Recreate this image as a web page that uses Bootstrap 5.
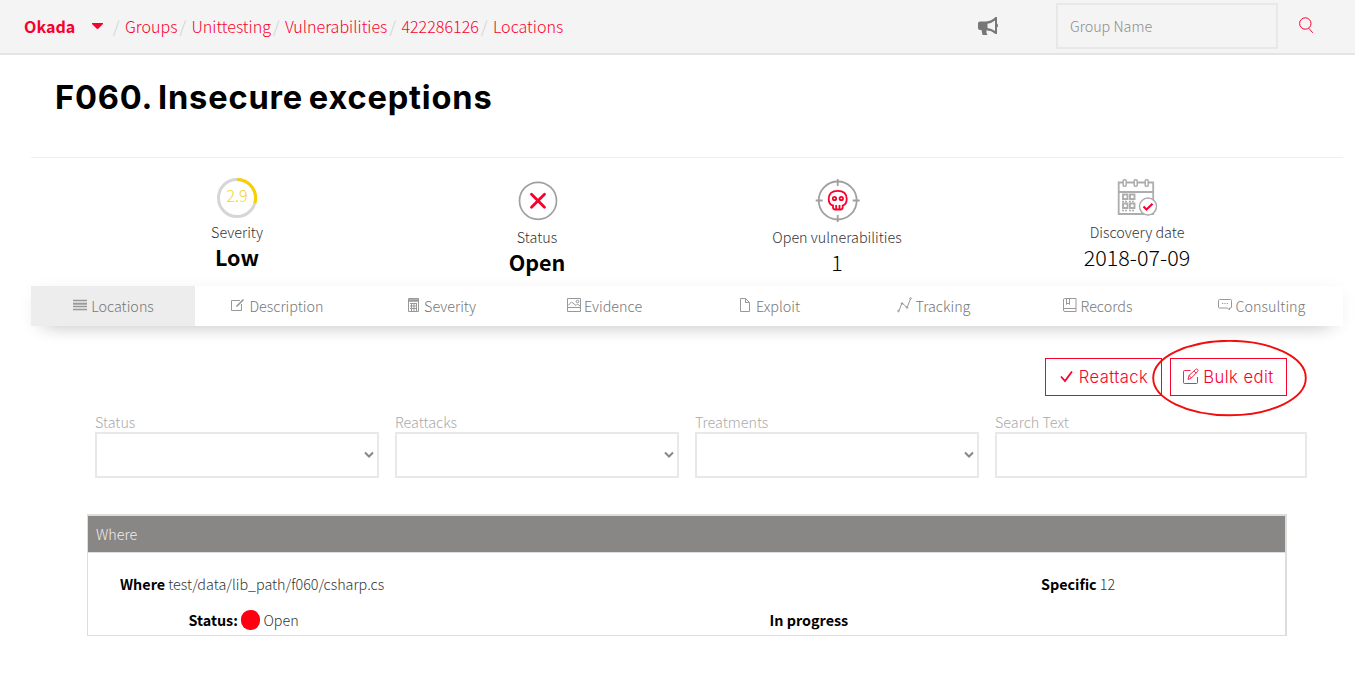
<!DOCTYPE html>
<html lang="en">
<head>
<meta charset="utf-8">
<meta name="viewport" content="width=device-width, initial-scale=1">
<title>F060. Insecure exceptions</title>
<link href="https://cdn.jsdelivr.net/npm/bootstrap@5.3.0/dist/css/bootstrap.min.css" rel="stylesheet">
<style>
:root{--brand:#f9002d}
body{font-family:"Noto Sans CJK SC","Open Sans",sans-serif;font-weight:300;font-size:14.35px;line-height:20px;color:#333;background:#fff;overflow:hidden}
b,.strong{font-weight:700;color:#000}
svg{display:block;flex:none}
.topbar{height:55px;background:#f4f4f4;border-bottom:2px solid #e4e4e4;padding-left:24px}
.topbar a{color:var(--brand);text-decoration:none}
.crumbs{font-size:16.1px;line-height:24px;padding-bottom:2px}
.crumbs .org{font-weight:700;width:67px}
.crumbs .sep{color:#ccc;width:12px;margin-left:2px}
.crumbs .caret+.sep{margin-left:-1px}
.caret{width:11px;height:6px;margin:0 11px 0 1px}
.group-box{width:222px;height:46px;border:2px solid #e8e8e8;background:#f4f4f4;border-radius:0;padding:0 12px 2px;font-size:14.35px;font-weight:300;margin:-1px 21px 0 57px}
.group-box::placeholder{color:#8c8c8c}
.megaphone,.search{margin-top:-2px}
.search{margin-right:41px}
h1{font-family:Inter,sans-serif;font-weight:700;font-size:32.6px;letter-spacing:.83px;word-spacing:-2.800px;line-height:40px;color:#000;margin:0;padding:22px 0 0 55px;height:102px;white-space:nowrap}
.page-body{margin:0 12px 0 31px}
.rule{border-top:1px solid #eee}
.stats{padding:20px 56px 0;height:128px}
.stat{width:300px}
.stat .big{font-size:21.5px;line-height:30px;color:#000}
.stat .lbl{line-height:20px;margin-top:-1px}
.tabs{height:40px;box-shadow:0 11px 20px -14px rgba(0,0,0,.32),0 2px 20px -4px rgba(0,0,0,.07);margin:0}
.tabs .nav-link{flex:1 1 0;padding:0 0 0 1px;color:#777;display:flex;align-items:center;justify-content:center;gap:4px;border-radius:0}
.tabs .nav-link.active{background:#ededed}
.tabs svg{fill:none;stroke:#999;stroke-width:1;margin-top:-3px}
.tabs .nav-link.snug{gap:2px;padding:0 1px 0 0}
.panel{width:1200px;margin:0 0 0 56px}
.actions{padding-top:32px;height:104px}
.act{width:117px;height:38px;padding:0;border:1px solid var(--brand);border-radius:0;color:var(--brand);background:#fff;font-family:Inter,sans-serif;font-weight:300;font-size:16.6px;letter-spacing:.45px;display:flex;align-items:center;justify-content:center;gap:4px}
.act svg{margin-top:-2px}
.ring{position:absolute;left:-18px;top:-18px;pointer-events:none}
.field{width:300px;padding:0 8px;flex:none}
.field.wide{width:328px}
.field label{display:block;height:18px;line-height:16px;color:#aaa;margin-top:-16px}
.filters{height:84px}
.box{height:46px;border:2px solid #e8e8e8;background:#fff;display:flex;align-items:center;justify-content:flex-end;padding:0 2px 0 0}
.where{border:1px solid #ddd;border-top:2px solid #ddd;border-right-width:2px;height:122px;width:1200px}
.where-head{height:37px;background:#898686;color:#eee;border-bottom:1px solid #ddd;padding:8px 8px 0}
.loc{padding:21px 0 0 32px}
.loc-where{width:921px}
.state{padding:16px 0 0 100.500px}
.state-open{width:581px;gap:3px}
.dot{width:19px;height:20px;border-radius:9px;background:#ff0012;margin-right:.6px}
</style>
</head>
<body>
<header class="topbar d-flex align-items-center">
  <nav class="crumbs d-flex align-items-center flex-grow-1">
    <a href="#" class="org">Okada</a>
    <svg class="caret" viewBox="0 0 11 6"><path d="M0 0h11v1L6.500 5.500q-1 .8-2 0L0 1z" fill="#f9002d"/></svg>
    <span class="sep">/</span><a href="#">Groups</a>
    <span class="sep">/</span><a href="#">Unittesting</a>
    <span class="sep">/</span><a href="#">Vulnerabilities</a>
    <span class="sep">/</span><a href="#">422286126</a>
    <span class="sep">/</span><a href="#">Locations</a>
  </nav>
  <svg class="megaphone" width="21" height="18" viewBox="0 0 21 18"><path fill="#777" fill-rule="evenodd" d="M19 0v6.800q1 .3 1 1.800t-1 1.800V17h-1.500Q13.500 13.500 8.500 13.200V16l1 2H4.500L3.500 13H2Q0 13 0 11V6.500Q0 4.500 2 4.500h6Q13.500 4 17.500 0zM17 3.500Q13 6.500 9.500 6.800v4.200q4 .3 7.500 3z"/></svg>
  <input class="form-control flex-grow-0 flex-shrink-0 group-box" placeholder="Group Name" aria-label="Group Name">
  <svg class="search" width="15" height="17" viewBox="0 0 15 17" fill="none" stroke="#f9002d" stroke-width="1"><circle cx="6.300" cy="6.500" r="5.700"/><path d="M9.800 11.300l4 4.500"/></svg>
</header>
<h1>F060. Insecure exceptions</h1>
<main class="page-body">
  <div class="rule"></div>
  <section class="stats d-flex text-center">
    <div class="stat">
      <svg class="mx-auto" width="40" height="45" viewBox="0 0 40 45"><g fill="none" stroke-width="3"><circle cx="20" cy="20" r="18.500" stroke="#d6d6d6"/><path d="M20 1.500A18.500 18.500 0 0 1 37.900 25" stroke="#f9cf00"/></g><text x="20" y="24" text-anchor="middle" font-size="16" fill="#f4d424">2.9</text></svg>
      <div class="lbl">Severity</div><div class="big strong">Low</div>
    </div>
    <div class="stat">
      <svg class="mx-auto" width="42" height="50" viewBox="0 0 42 50" fill="none"><circle cx="22" cy="22.800" r="18.500" stroke="#a0a0a0" stroke-width="1.700"/><path d="M15.500 16.300l13 13m0-13l-13 13" stroke="#f9002d" stroke-width="2.800" stroke-linecap="round"/></svg>
      <div class="lbl">Status</div><div class="big strong">Open</div>
    </div>
    <div class="stat">
      <svg class="mx-auto" width="46" height="50" viewBox="0 0 46 50" fill="none" stroke="#a0a0a0" stroke-width="1.800"><circle cx="23.700" cy="22.500" r="19"/><path d="M23.700 1v7M23.700 37v7M1.700 22.500h7M38.700 22.500h7"/><g stroke="#f9002d" stroke-width="1.800"><path d="M19 27.500Q14.700 26.500 14.700 21 14.700 12.800 23.700 12.800T32.700 21Q32.700 26.500 28.700 27.500V29q0 2.500-2 2.500h-5.500q-2.200 0-2.200-2.500zM22.200 27v4M25.500 27v4"/><circle cx="20.500" cy="20.500" r="1.700"/><circle cx="27.300" cy="20.500" r="1.700"/></g></svg>
      <div class="lbl">Open vulnerabilities</div><div class="big">1</div>
    </div>
    <div class="stat">
      <svg class="mx-auto" width="40" height="45" viewBox="0 0 40 45" fill="none" stroke="#adadad" stroke-width="1.800"><path d="M1.700 4.500h34.500v31.500H1.700zM2 14h34"/><g fill="#fff" stroke-width="1.500"><rect x="6.200" y="1.800" width="3" height="6.500" rx="1"/><rect x="17.200" y="1.800" width="3" height="6.500" rx="1"/><rect x="28.200" y="1.800" width="3" height="6.500" rx="1"/></g><path stroke-width="1.900" d="M6 16.500h4.500v4.500H6zM13 16.500h4.500v4.500H13zM6 25.500h4.500v4.500H6zM13 25.500h4.500v4.500H13z"/><path stroke-width="1.500" stroke-dasharray="2 1" d="M5 23.500h5M12 23.500h5M5 32.500h5M12 32.500h5"/><circle cx="31" cy="28.500" r="8.500" fill="#fff" stroke-width="1.500"/><path d="M26.500 28.500l3 3 6-5.800" stroke="#f9002d" stroke-width="2.100"/></svg>
      <div class="lbl">Discovery date</div><div class="big">2018-07-09</div>
    </div>
  </section>
  <nav class="nav tabs">
    <a class="nav-link active" href="#"><svg width="14" height="12"><path d="M0 1.500h14M0 4.500h14M0 7.500h14M0 10.500h14" stroke-width="1.300"/><path d="M0 5.500h14" stroke-width=".6"/></svg>Locations</a>
    <a class="nav-link" href="#"><svg width="14" height="14"><path d="M9 2.500H.5v10h10V6"/><path d="M5.500 8.500L12.500 1.500" stroke-width="1.700"/></svg>Description</a>
    <a class="nav-link" href="#"><svg width="13" height="14"><path d="M1.500.5h10v13h-10zM3 5.500h7M3 8h7M3 10.500h7M4.500 5v8M7 5v8M9.500 5v8"/><path d="M2 2.500h9" stroke-width="2.500"/></svg>Severity</a>
    <a class="nav-link snug" href="#"><svg width="15" height="14"><path d="M.5.500h13v13H.5zM.5 9.500h13M1 7.500L4.500 4 9 7.500l1.500-1.500L13 8"/><circle cx="10.500" cy="3.500" r="1.300"/></svg>Evidence</a>
    <a class="nav-link" href="#"><svg width="13" height="14"><path d="M1.500.5h5l4 4v9h-9zM6.500.5v4h4"/></svg>Exploit</a>
    <a class="nav-link" href="#"><svg width="15" height="16"><path d="M2 13.500L5 6l5 4.500L13.500 2"/><circle cx="1.500" cy="14" r=".8"/><circle cx="5" cy="6.500" r=".8"/><circle cx="10" cy="10.500" r=".8"/><circle cx="13.500" cy="1.500" r=".8"/></svg>Tracking</a>
    <a class="nav-link" href="#"><svg width="14" height="14"><path d="M13 .5H1.500Q.5.500.5 2v10q0 1.500 1.500 1.500H13zM.5 10.500H13M3.500.5v6L5 5l1.500 1.500v-6"/></svg>Records</a>
    <a class="nav-link" href="#"><svg width="14" height="13"><path d="M1.500 1.500h11q1 0 1 1v6.500q0 1-1 1h-1v2l-2-2h-8q-1 0-1-1V2.500q0-1 1-1z"/><path d="M4 5.500h6" stroke-dasharray="1.200 1.200"/></svg>Consulting</a>
  </nav>
  <div class="panel">
    <div class="actions d-flex justify-content-end gap-2 align-items-start">
      <button class="btn act"><svg width="16" height="16" fill="none" stroke="#f9002d" stroke-width="1.800"><path d="M2 8.500l4 4.500 7-9.500"/></svg>Reattack</button>
      <div class="position-relative">
        <button class="btn act"><svg width="16" height="17" fill="none" stroke="#f9002d" stroke-width=".85"><path d="M7.500 2.500H1.500Q.5 2.500.5 3.500v11q0 1 1 1h12q1 0 1-1V9M5 11.500l1-4L12.500 1.500q1-1 2 0t0 2L8.500 10zM11 3l2.200 2.200M6 7.500L8.500 10"/></svg>Bulk edit</button>
        <svg class="ring" width="156" height="77"><ellipse cx="77.500" cy="38" rx="76.300" ry="37.200" fill="none" stroke="#f20d0d" stroke-width="1.900"/></svg>
      </div>
    </div>
    <div class="filters d-flex">
      <div class="field"><label>Status</label><div class="box"><svg width="12" height="8" fill="none" stroke="#888" stroke-width="2"><path d="M2 1.500l4 4 4-4"/></svg></div></div>
      <div class="field"><label>Reattacks</label><div class="box"><svg width="12" height="8" fill="none" stroke="#888" stroke-width="2"><path d="M2 1.500l4 4 4-4"/></svg></div></div>
      <div class="field"><label>Treatments</label><div class="box"><svg width="12" height="8" fill="none" stroke="#888" stroke-width="2"><path d="M2 1.500l4 4 4-4"/></svg></div></div>
      <div class="field wide"><label>Search Text</label><div class="box"></div></div>
    </div>
    <section class="where">
      <div class="where-head">Where</div>
      <div class="loc d-flex"><div class="loc-where"><b>Where</b> test/data/lib_path/f060/csharp.cs</div><div><b>Specific</b> 12</div></div>
      <div class="state d-flex"><div class="state-open d-flex align-items-center"><b>Status:</b><span class="dot"></span><span>Open</span></div><b>In progress</b></div>
    </section>
  </div>
</main>
<script src="https://cdn.jsdelivr.net/npm/bootstrap@5.3.0/dist/js/bootstrap.bundle.min.js"></script>
</body>
</html>
